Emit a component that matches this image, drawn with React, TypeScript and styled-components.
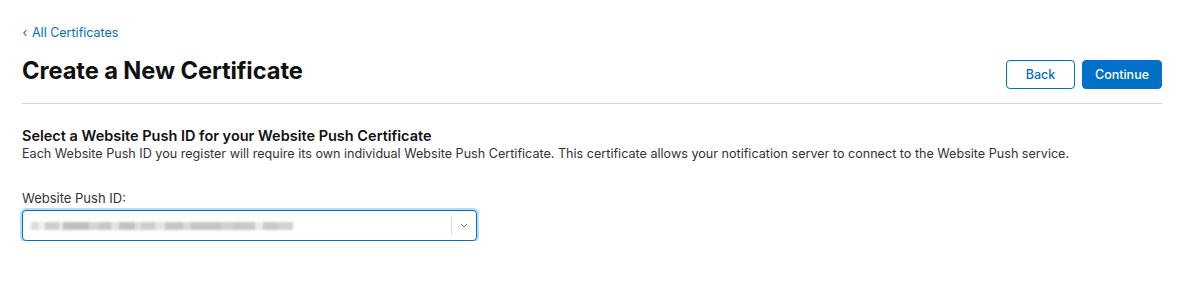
import React from 'react';
import styled, { createGlobalStyle } from 'styled-components';

const GlobalStyle = createGlobalStyle`
  body {
    margin: 0;
    background: #fff;
    font-family: Inter, "Helvetica Neue", Arial, sans-serif;
    color: #1d1d1f;
  }
`;

const Page = styled.div`
  padding: 21px 18px 0 22px;
`;

const BackLink = styled.a`
  display: inline-flex;
  align-items: center;
  gap: 4px;
  font-size: 12.5px;
  color: #0070c9;
  text-decoration: none;
  line-height: 16px;
`;

const Header = styled.div`
  display: flex;
  align-items: flex-end;
  justify-content: space-between;
  padding: 15px 0 14px;
  border-bottom: 1px solid #d6d6d6;
`;

const Title = styled.h1`
  margin: 0 0 3px;
  font-size: 23.7px;
  line-height: 30px;
  font-weight: 700;
  letter-spacing: -0.1px;
  color: #111;
`;

const Actions = styled.div`
  display: flex;
  gap: 7px;
`;

const Button = styled.button<{ $primary?: boolean }>`
  height: 29px;
  padding: 0 12px;
  border-radius: 4px;
  font-family: inherit;
  font-size: 12.5px;
  font-weight: 500;
  cursor: pointer;
  border: 1px solid #0070c9;
  background: ${(p) => (p.$primary ? '#0070c9' : '#fff')};
  color: ${(p) => (p.$primary ? '#fff' : '#0070c9')};
  min-width: ${(p) => (p.$primary ? '79px' : '69px')};
`;

const Section = styled.section`
  padding-top: 23px;
`;

const SectionTitle = styled.h2`
  margin: 0;
  font-size: 14.5px;
  font-weight: 600;
  line-height: 18px;
  color: #111;
`;

const Description = styled.p`
  margin: 1px 0 0;
  font-size: 12.6px;
  line-height: 16px;
  color: #333;
`;

const Field = styled.div`
  margin-top: 28px;
  width: 455px;
`;

const Label = styled.label`
  display: block;
  font-size: 13px;
  line-height: 16px;
  color: #333;
  margin-bottom: 4px;
`;

const Select = styled.div`
  display: flex;
  align-items: center;
  height: 29px;
  border: 1px solid #0070c9;
  border-radius: 4px;
  box-shadow: 0 0 0 2px #b9dcf5;
  background: #fff;
`;

const Value = styled.div`
  flex: 1;
  display: flex;
  align-items: center;
  padding-left: 8px;
  filter: blur(1.3px);
`;

const Blob = styled.span<{ $shade: string }>`
  display: block;
  height: 8px;
  background: ${(p) => p.$shade};
`;

const Chevron = styled.div`
  display: flex;
  align-items: center;
  justify-content: center;
  width: 24px;
  height: 19px;
  border-left: 1px solid #dcdcdc;
  color: #777;
`;

const blobs: [number, string][] = [
  [8, '#dcdcdc'], [6, '#f0f0f0'], [14, '#cfcfcf'], [4, '#e8e8e8'], [26, '#c0c0c0'],
  [10, '#d4d4d4'], [12, '#c8c8c8'], [8, '#e2e2e2'], [16, '#c2c2c2'], [6, '#dedede'],
  [14, '#cdcdcd'], [10, '#e4e4e4'], [18, '#c6c6c6'], [8, '#d8d8d8'], [30, '#c4c4c4'],
  [12, '#d0d0d0'], [22, '#c9c9c9'], [8, '#ececec'], [14, '#cacaca'], [16, '#d2d2d2'],
];

export default function App() {
  return (
    <>
      <GlobalStyle />
      <Page>
        <BackLink href="#">
          <svg width="6" height="8" viewBox="0 0 6 8">
            <path d="M4.5 1 1.8 4l2.7 3" fill="none" stroke="currentColor" strokeWidth="1.1" />
          </svg>
          All Certificates
        </BackLink>
        <Header>
          <Title>Create a New Certificate</Title>
          <Actions>
            <Button>Back</Button>
            <Button $primary>Continue</Button>
          </Actions>
        </Header>
        <Section>
          <SectionTitle>Select a Website Push ID for your Website Push Certificate</SectionTitle>
          <Description>
            Each Website Push ID you register will require its own individual Website Push Certificate. This
            certificate allows your notification server to connect to the Website Push service.
          </Description>
          <Field>
            <Label>Website Push ID:</Label>
            <Select>
              <Value>
                {blobs.map(([w, c], i) => (
                  <Blob key={i} $shade={c} style={{ width: w }} />
                ))}
              </Value>
              <Chevron>
                <svg width="8" height="5" viewBox="0 0 8 5">
                  <path d="M1 1l3 3 3-3" fill="none" stroke="currentColor" strokeWidth="1" />
                </svg>
              </Chevron>
            </Select>
          </Field>
        </Section>
      </Page>
    </>
  );
}
